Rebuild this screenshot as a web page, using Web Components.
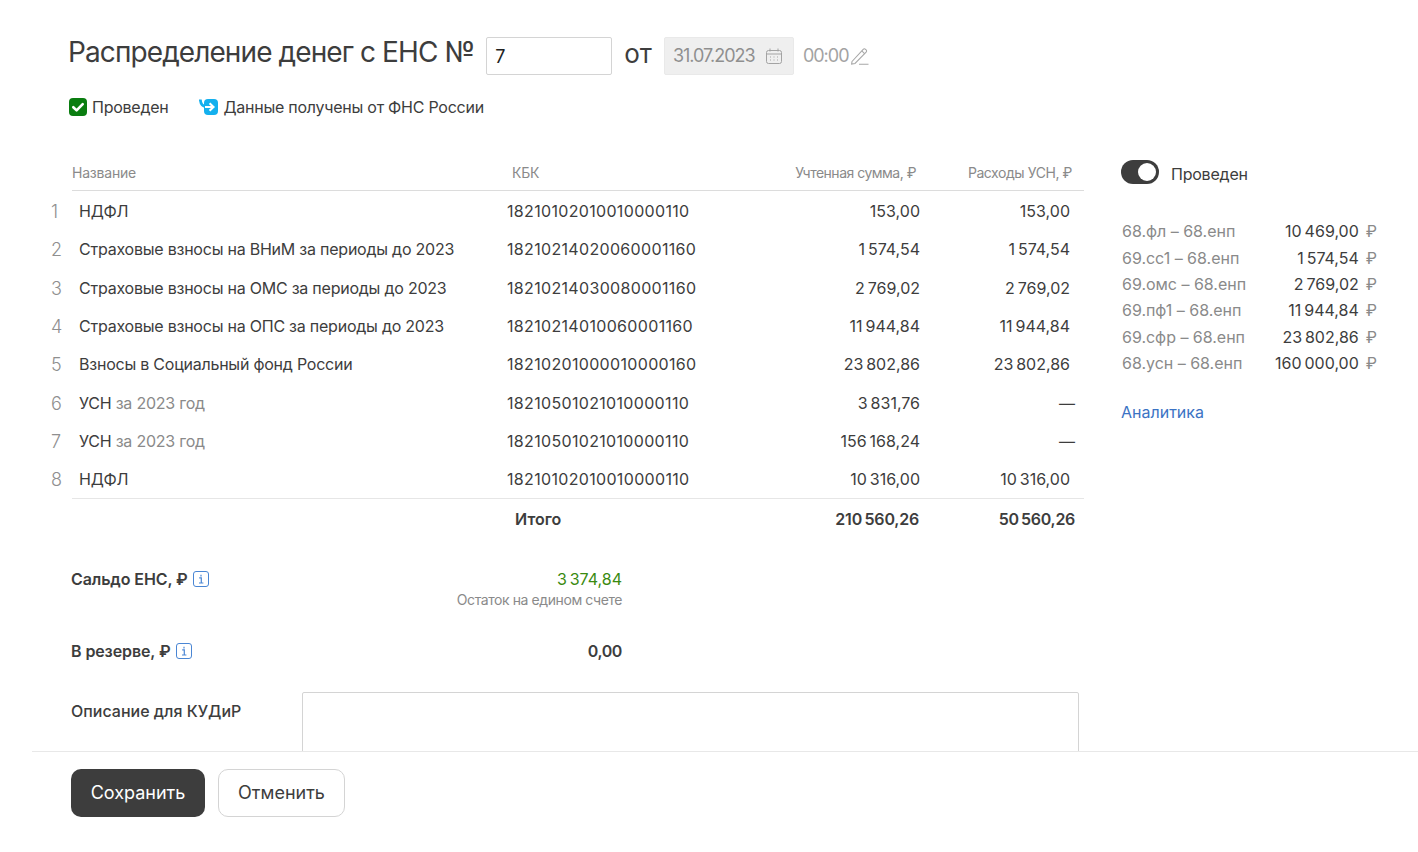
<!DOCTYPE html>
<html lang="ru">
<head>
<meta charset="utf-8">
<title>Распределение денег с ЕНС</title>
<style>
    html, body { margin: 0; height: 100%; background: #fff; overflow: hidden; }
    body { font: 16px/20px Inter, "Noto Sans", sans-serif; color: #3d3d3d; }
</style>
</head>
<body>
<enp-page>
    <enp-head slot="head" number="7" date="31.07.2023" time="00:00"></enp-head>
    <enp-table slot="table">
        <enp-row n="1" name="НДФЛ" kbk="18210102010010000110" sum="153,00" exp="153,00"></enp-row>
        <enp-row n="2" name="Страховые взносы на ВНиМ за периоды до 2023" kbk="18210214020060001160" sum="1 574,54" exp="1 574,54"></enp-row>
        <enp-row n="3" name="Страховые взносы на ОМС за периоды до 2023" kbk="18210214030080001160" sum="2 769,02" exp="2 769,02"></enp-row>
        <enp-row n="4" name="Страховые взносы на ОПС за периоды до 2023" kbk="18210214010060001160" sum="11 944,84" exp="11 944,84"></enp-row>
        <enp-row n="5" name="Взносы в Социальный фонд России" kbk="18210201000010000160" sum="23 802,86" exp="23 802,86"></enp-row>
        <enp-row n="6" name="УСН" period="за 2023 год" kbk="18210501021010000110" sum="3 831,76" exp="—"></enp-row>
        <enp-row n="7" name="УСН" period="за 2023 год" kbk="18210501021010000110" sum="156 168,24" exp="—"></enp-row>
        <enp-row n="8" name="НДФЛ" kbk="18210102010010000110" sum="10 316,00" exp="10 316,00"></enp-row>
    </enp-table>
    <enp-side slot="side">
        <enp-post from="68.фл – 68.енп" sum="10 469,00"></enp-post>
        <enp-post from="69.сс1 – 68.енп" sum="1 574,54"></enp-post>
        <enp-post from="69.омс – 68.енп" sum="2 769,02"></enp-post>
        <enp-post from="69.пф1 – 68.енп" sum="11 944,84"></enp-post>
        <enp-post from="69.сфр – 68.енп" sum="23 802,86"></enp-post>
        <enp-post from="68.усн – 68.енп" sum="160 000,00"></enp-post>
    </enp-side>
    <enp-summary slot="summary"></enp-summary>
    <enp-footer slot="footer"></enp-footer>
</enp-page>

<script>
(function () {
    "use strict"

    const nb = (s) => (s || '').replace(/ /g, '\u2009');

    class EnpPage extends HTMLElement {
        constructor() {
            super();
            this.attachShadow({ mode: 'open' }).innerHTML = `
                <style>
                    :host { display: flex; flex-direction: column; height: 852px; }
                    .scroll { height: 751px; overflow: hidden; flex: none; }
                    .main { display: flex; }
                    .left { width: 1084px; flex: none; }
                    .right { margin-left: 37px; flex: 1; }
                </style>
                <div class="scroll">
                    <slot name="head"></slot>
                    <div class="main">
                        <div class="left"><slot name="table"></slot></div>
                        <div class="right"><slot name="side"></slot></div>
                    </div>
                    <slot name="summary"></slot>
                </div>
                <slot name="footer"></slot>
            `;
        }
    }

    class EnpHead extends HTMLElement {
        connectedCallback() {
            const a = (n) => this.getAttribute(n);
            this.attachShadow({ mode: 'open' }).innerHTML = `
                <style>
                    :host { display: block; padding: 37px 0 0 68px; height: 126px; }
                    .top { display: flex; align-items: center; height: 38px; }
                    h1 { margin: 0 0 9px; font: 400 28px/38px Inter, sans-serif; letter-spacing: -0.9px; color: #3d3d3d; white-space: nowrap; }
                    .num { width: 126px; height: 38px; box-sizing: border-box; margin-left: 12px; padding: 0 8px;
                        border: 1px solid #d4d4d4; border-radius: 2px; line-height: 38px; font-size: 18px; color: #222; }
                    .from { margin: 0 12px 5px; font-size: 26px; line-height: 30px; color: #3d3d3d; }
                    .date { width: 130px; height: 38px; box-sizing: border-box; padding: 0 11px 0 8px; background: #efefef;
                        border: 1px solid #e9e9e9; border-radius: 2px; display: flex; align-items: center;
                        justify-content: space-between; font-size: 18px; color: #8f8f8f; letter-spacing: -1px; }
                    .time { margin-left: 9px; font-size: 18px; color: #a3a3a3; letter-spacing: -1px; }
                    .status { display: flex; align-items: center; height: 20px; margin-top: 22px; padding-left: 1px; font-size: 16px; letter-spacing: -0.25px; }
                    .status svg { flex: none; }
                    .status span { margin-left: 5px; }
                    .fns { margin-left: 31px; }
                </style>
                <div class="top">
                    <h1>Распределение денег с ЕНС №</h1>
                    <div class="num">${a('number')}</div>
                    <div class="from">от</div>
                    <div class="date">${a('date')}
                        <svg width="16" height="16" viewBox="0 0 16 16" fill="none" stroke="#a3a3a3" stroke-width="1">
                            <rect x="0.5" y="2.5" width="15" height="13" rx="2"/>
                            <path d="M0.5 6h15M4 0.5v3M12 0.5v3"/>
                            <path d="M4 9h1M7.5 9h1M11 9h1M4 12h1M7.5 12h1M11 12h1" stroke-width="1.2"/>
                        </svg>
                    </div>
                    <div class="time">${a('time')}</div>
                    <svg width="18" height="18" viewBox="0 0 18 18" fill="none" stroke="#a8a8a8" stroke-width="1.1" style="margin-left:2px">
                        <path d="M1 14.5 12.2 2.3a1.6 1.6 0 0 1 2.3 0l.6.6a1.6 1.6 0 0 1 0 2.3L4 16.5l-3.4.6z"/>
                        <path d="M10.8 3.8 13.8 6.8M8 17.3h9.5"/>
                    </svg>
                </div>
                <div class="status">
                    <svg width="18" height="18" viewBox="0 0 18 18">
                        <rect width="18" height="18" rx="4" fill="#0a7d10"/>
                        <path d="M4.3 9.2 7.6 12.4 13.7 6.2" fill="none" stroke="#fff" stroke-width="2.6" stroke-linecap="round" stroke-linejoin="round"/>
                    </svg>
                    <span>Проведен</span>
                    <svg class="fns" width="20" height="18" viewBox="0 0 20 18">
                        <rect x="5" y="1" width="14" height="16" rx="4" fill="#14b0ee"/>
                        <path d="M1.3 1.5C1.6 5.8 3.6 8.3 7 8.7" fill="none" stroke="#14b0ee" stroke-width="2.8"/>
                        <path d="M6 9h8.5M10.6 5.2 14.5 9 10.6 12.8" fill="none" stroke="#fff" stroke-width="2.1"/>
                    </svg>
                    <span style="margin-left:4px">Данные получены от ФНС России</span>
                </div>
            `;
        }
    }

    const gridCols = 'grid-template-columns: 40px 435px 200px 213px 150px 14px;';

    class EnpTable extends HTMLElement {
        constructor() {
            super();
            this.attachShadow({ mode: 'open' }).innerHTML = `
                <style>
                    :host { display: block; padding-left: 32px; }
                    .head { margin-left: 40px; display: flex; height: 27px; border-bottom: 1px solid #dcdcdc; font-size: 14px; line-height: 20px; color: #8a8a8a; letter-spacing: -0.2px; }
                    .head div:nth-child(1) { width: 440px; }
                    .head div:nth-child(2) { width: 200px; }
                    .head div:nth-child(3) { width: 204px; text-align: right; letter-spacing: -0.5px; }
                    .head div:nth-child(4) { width: 156px; text-align: right; letter-spacing: -0.42px; }
                    .rows { padding: 1px 0 0; }
                    .total { display: grid; ${gridCols} height: 41px; align-items: center; font-weight: 600; position: relative; }
                    .total::before { content: ""; position: absolute; left: 40px; right: 0; top: 0; border-top: 1px solid #e6e6e6; }
                    .total .t { grid-column: 3; padding-left: 8px; }
                    .total .s { grid-column: 4; text-align: right; padding-right: 1px; letter-spacing: -0.2px; }
                    .total .e { grid-column: 5 / 7; text-align: right; padding-right: 9px; letter-spacing: -0.3px; }
                </style>
                <div class="head"><div>Название</div><div>КБК</div><div>Учтенная сумма, ₽</div><div>Расходы УСН, ₽</div></div>
                <div class="rows"><slot></slot></div>
                <div class="total"><span class="t">Итого</span><span class="s">${nb('210 560,26')}</span><span class="e">${nb('50 560,26')}</span></div>
            `;
        }
    }

    class EnpRow extends HTMLElement {
        connectedCallback() {
            const a = (n) => this.getAttribute(n);
            const period = a('period') ? ` <span class="dim">${a('period')}</span>` : '';
            const dash = a('exp') === '—' ? ' dash' : '';
            this.attachShadow({ mode: 'open' }).innerHTML = `
                <style>
                    :host { display: grid; ${gridCols} height: 38.3px; align-items: center; white-space: nowrap; color: #3d3d3d; }
                    .n { grid-column: 1; padding: 2px 0 0 19px; color: #8f8f8f; font-size: 18px; font-weight: 300; }
                    .name { padding-left: 7px; letter-spacing: -0.23px; }
                    .dim { color: #8a8a8a; }
                    .kbk { letter-spacing: 0.33px; }
                    .sum { text-align: right; }
                    .exp { text-align: right; }
                    .dash { margin-right: -5px; }
                </style>
                <div class="n">${a('n')}</div>
                <div class="name">${a('name')}${period}</div>
                <div class="kbk">${a('kbk')}</div>
                <div class="sum">${nb(a('sum'))}</div>
                <div class="exp${dash}">${nb(a('exp'))}</div>
            `;
        }
    }

    class EnpSide extends HTMLElement {
        constructor() {
            super();
            this.attachShadow({ mode: 'open' }).innerHTML = `
                <style>
                    :host { display: block; width: 256px; }
                    .toggle { display: flex; align-items: center; height: 24px; margin-top: -3px; letter-spacing: -0.22px; }
                    .track { width: 38px; height: 24px; border-radius: 12px; background: #3d3d3d; position: relative; }
                    .track::after { content: ""; position: absolute; right: 3px; top: 3px; width: 18px; height: 18px; border-radius: 50%; background: #fff; }
                    .toggle span { margin-left: 12px; padding-top: 3px; }
                    .list { margin-top: 34px; }
                    a { display: block; margin-top: 26px; color: #3b73c4; text-decoration: none; }
                </style>
                <div class="toggle"><div class="track"></div><span>Проведен</span></div>
                <div class="list"><slot></slot></div>
                <a href="#">Аналитика</a>
            `;
        }
    }

    class EnpPost extends HTMLElement {
        connectedCallback() {
            this.attachShadow({ mode: 'open' }).innerHTML = `
                <style>
                    :host { display: flex; justify-content: space-between; height: 26.4px; align-items: center; color: #8a8a8a; white-space: nowrap; }
                    .from { padding-left: 1px; letter-spacing: -0.02px; }
                    .sum { color: #3d3d3d; }
                    .cur { color: #8a8a8a; margin-left: 7px; }
                </style>
                <span class="from">${this.getAttribute('from')}</span>
                <span class="sum">${nb(this.getAttribute('sum'))}<span class="cur">₽</span></span>
            `;
        }
    }

    class EnpInfo extends HTMLElement {
        constructor() {
            super();
            this.attachShadow({ mode: 'open' }).innerHTML = `
                <style>:host { display: inline-flex; vertical-align: -2px; margin-left: 5px; }</style>
                <svg width="16" height="16" viewBox="0 0 16 16" fill="none" stroke="#4a86d4">
                    <rect x="0.5" y="0.5" width="15" height="15" rx="2.5"/>
                    <path d="M6.2 6.8H8.3V12M6 12h4.4M8 3.8v1.6" stroke-width="1.2"/>
                </svg>
            `;
        }
    }

    class EnpSummary extends HTMLElement {
        constructor() {
            super();
            this.attachShadow({ mode: 'open' }).innerHTML = `
                <style>
                    :host { display: block; padding-left: 71px; }
                    .line { display: flex; justify-content: space-between; width: 551px; font-weight: 600; }
                    .lbl { letter-spacing: -0.1px; }
                    .saldo { margin-top: 30px; height: 52px; }
                    .reserve { margin-top: 20px; height: 51px; }
                    .val { text-align: right; }
                    .nil { letter-spacing: -0.4px; }
                    .green { color: #3a8a10; font-weight: 400; }
                    .sub { font-size: 14px; font-weight: 400; color: #8a8a8a; letter-spacing: -0.42px; line-height: 22px; }
                    .desc { display: flex; }
                    .desc label { width: 231px; padding-top: 9px; flex: none; font-weight: 500; }
                    .box { width: 777px; height: 90px; box-sizing: border-box; border: 1px solid #d4d4d4; border-radius: 2px; }
                </style>
                <div class="line saldo"><div class="lbl">Сальдо ЕНС, ₽<enp-info></enp-info></div>
                    <div class="val"><div class="green">${nb('3 374,84')}</div><div class="sub">Остаток на едином счете</div></div></div>
                <div class="line reserve"><div class="lbl">В резерве, ₽<enp-info></enp-info></div><div class="val nil">0,00</div></div>
                <div class="desc"><label>Описание для КУДиР</label><div class="box"></div></div>
            `;
        }
    }

    class EnpFooter extends HTMLElement {
        constructor() {
            super();
            this.attachShadow({ mode: 'open' }).innerHTML = `
                <style>
                    :host { display: flex; margin-left: 32px; padding: 17px 0 0 39px; border-top: 1px solid #e8e8e8; gap: 13px; align-items: flex-start; height: 84px; }
                    button { height: 48px; border-radius: 10px; font: 18px/24px Inter, sans-serif; cursor: pointer; }
                    .save { width: 134px; background: #3d3d3d; color: #fff; border: 0; }
                    .cancel { width: 127px; background: #fff; color: #3d3d3d; border: 1px solid #d4d4d4; }
                </style>
                <button class="save">Сохранить</button>
                <button class="cancel">Отменить</button>
            `;
        }
    }

    customElements.define('enp-page', EnpPage);
    customElements.define('enp-head', EnpHead);
    customElements.define('enp-table', EnpTable);
    customElements.define('enp-row', EnpRow);
    customElements.define('enp-side', EnpSide);
    customElements.define('enp-post', EnpPost);
    customElements.define('enp-info', EnpInfo);
    customElements.define('enp-summary', EnpSummary);
    customElements.define('enp-footer', EnpFooter);
})();
</script>
</body>
</html>
